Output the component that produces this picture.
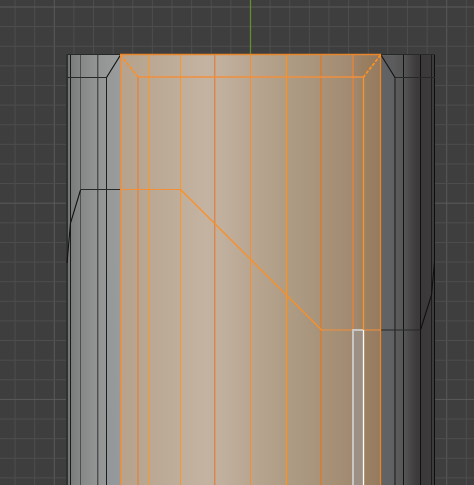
import React from 'react';

const GRID_STEP = 19.62;

const gridColumns = Array.from({ length: 25 }, (_, i) => ({
  pos: 250.5 + (i - 12) * GRID_STEP,
  major: Math.abs(i - 12) === 10,
}));

const gridRows = Array.from({ length: 25 }, (_, i) => ({
  pos: 7 + i * GRID_STEP,
  major: i % 10 === 0,
}));

// Vertical edges of the unselected faces
const darkEdges = [
  { x: 67, top: 54, color: '#303131', width: 2 },
  { x: 70.5, top: 54, color: '#1b1b1b', width: 1 },
  { x: 80.5, top: 54, color: '#4e504f', width: 1 },
  { x: 97.5, top: 54, color: '#4d4f4e', width: 1 },
  { x: 98.5, top: 54, color: '#747675', width: 1 },
  { x: 106.5, top: 77, color: '#1d1e1e', width: 1 },
  { x: 395, top: 77, color: '#3b3b3b', width: 2 },
  { x: 403.5, top: 54, color: '#141414', width: 1 },
  { x: 420.5, top: 54, color: '#101010', width: 1 },
  { x: 431.5, top: 54, color: '#1d1c1c', width: 1 },
  { x: 434.5, top: 54, color: '#0e0e0e', width: 1 },
];

// Vertical edges of the selected faces
const selectedEdges = [
  { x: 120.5, top: 54, color: '#f28c32', width: 1 },
  { x: 121.5, top: 54, color: '#cc9c70', width: 1 },
  { x: 138, top: 77, color: '#d08f5f', width: 2 },
  { x: 148.5, top: 54, color: '#ff981c', width: 1 },
  { x: 180.5, top: 54, color: '#fd9528', width: 1 },
  { x: 214.5, top: 54, color: '#d9874d', width: 1 },
  { x: 215.5, top: 54, color: '#cb9f80', width: 1 },
  { x: 250.5, top: 54, color: '#f38f39', width: 1 },
  { x: 286.5, top: 54, color: '#fb9322', width: 1.4 },
  { x: 321, top: 54, color: '#c78244', width: 2 },
  { x: 353, top: 54, color: '#cf8548', width: 2 },
  { x: 363.5, top: 77, color: '#f8942a', width: 1.3 },
  { x: 380.5, top: 54, color: '#e88627', width: 1.3 },
];

const Grid = () => (
  <g strokeWidth="1">
    {gridColumns.map(({ pos, major }) => (
      <line key={`c${pos}`} x1={pos} x2={pos} y1="0" y2="485" stroke={major ? '#5a5a5a' : '#4e4e4e'} />
    ))}
    {gridRows.map(({ pos, major }) => (
      <line key={`r${pos}`} x1="0" x2="474" y1={pos} y2={pos} stroke={major ? '#5a5a5a' : '#4e4e4e'} />
    ))}
    <line x1="250.5" x2="250.5" y1="0" y2="54" stroke="#62902b" strokeWidth="1.3" />
  </g>
);

const Faces = () => (
  <g>
    <rect x="67" y="54" width="54" height="431" fill="url(#faceLeft)" />
    <rect x="120" y="54" width="261" height="431" fill="url(#faceSelected)" />
    <rect x="381" y="54" width="54" height="431" fill="url(#faceRight)" />
    <path d="M107 77 120 55V485H107Z" fill="url(#bevelShade)" />
    <path d="M363 77 380 55H353V77Z" fill="#8f7251" opacity="0.2" />
    <path d="M382 56 395 78 403 78V55Z" fill="#555656" opacity="0.4" />
  </g>
);

const Edges = ({ edges }) =>
  edges.map(({ x, top, color, width }) => (
    <line key={x} x1={x} x2={x} y1={top} y2="485" stroke={color} strokeWidth={width} />
  ));

const App = () => (
  <main className="h-screen w-full overflow-hidden bg-[#3e3e3e]">
    <svg
      className="block h-full w-full"
      viewBox="0 0 474 485"
      preserveAspectRatio="xMidYMid slice"
      fill="none"
      role="img"
      aria-label="Cylinder mesh in the 3D viewport"
    >
      <defs>
        <linearGradient id="faceLeft" gradientUnits="userSpaceOnUse" x1="67" x2="121" y1="0" y2="0">
          <stop offset="0" stopColor="#6e7070" />
          <stop offset="0.07" stopColor="#7a7c7b" />
          <stop offset="0.25" stopColor="#858886" />
          <stop offset="0.57" stopColor="#929593" />
          <stop offset="1" stopColor="#9a9d9d" />
        </linearGradient>
        <linearGradient id="faceSelected" gradientUnits="userSpaceOnUse" x1="120" x2="381" y1="0" y2="0">
          <stop offset="0" stopColor="#b8a28c" />
          <stop offset="0.06" stopColor="#b7a590" />
          <stop offset="0.23" stopColor="#bfae9b" />
          <stop offset="0.33" stopColor="#c3b3a0" />
          <stop offset="0.4" stopColor="#c0af9d" />
          <stop offset="0.5" stopColor="#b9a691" />
          <stop offset="0.64" stopColor="#ae9c85" />
          <stop offset="0.77" stopColor="#a8937a" />
          <stop offset="0.82" stopColor="#a59076" />
          <stop offset="0.9" stopColor="#a0886f" />
          <stop offset="0.94" stopColor="#9b8164" />
          <stop offset="1" stopColor="#957a5f" />
        </linearGradient>
        <linearGradient id="faceRight" gradientUnits="userSpaceOnUse" x1="381" x2="435" y1="0" y2="0">
          <stop offset="0" stopColor="#626365" />
          <stop offset="0.24" stopColor="#5f6163" />
          <stop offset="0.28" stopColor="#5b5c5b" />
          <stop offset="0.42" stopColor="#565656" />
          <stop offset="0.65" stopColor="#3d3b3b" />
          <stop offset="0.75" stopColor="#3b3839" />
          <stop offset="1" stopColor="#3e3b3b" />
        </linearGradient>
        <linearGradient id="bevelShade" gradientUnits="userSpaceOnUse" x1="0" x2="0" y1="240" y2="485">
          <stop offset="0" stopColor="#8d949c" stopOpacity="0" />
          <stop offset="1" stopColor="#8d949c" stopOpacity="0.35" />
        </linearGradient>
      </defs>

      <Grid />
      <Faces />
      <Edges edges={darkEdges} />

      {/* rims, bevels and the cut around the back */}
      <g stroke="#272828" strokeWidth="1">
        <path d="M67 54.5H120M381 54.5H435M67 77.5H106.5M395 77.5H435" />
        <path d="M106.5 77.5 120.5 55M381 55 395 77.5" stroke="#161616" strokeWidth="1.2" />
        <path d="M80.5 189.5H120M381 330H420.5" />
        <path d="M80.5 190 70.5 223 67 263M420.5 330 431.5 295 434.5 262" stroke="#111111" strokeWidth="1.1" />
      </g>

      <Edges edges={selectedEdges} />

      <g stroke="#f28f38" strokeWidth="1">
        <path d="M120 54.5H381" stroke="#e8862c" strokeWidth="1.4" />
        <path d="M138 77H363.5" stroke="#f28f3c" strokeWidth="1.5" />
        <path d="M120.5 55 138 77M380.5 55 363.5 77" stroke="#ff9020" strokeWidth="1.7" strokeDasharray="3.5 1.5" />
        <path d="M120 189.5H180.5M321 330H381" strokeWidth="1.2" />
        <path d="M180.5 189.5 321.5 330" stroke="#fb9026" strokeWidth="1.25" />
      </g>

      {/* active face */}
      <rect x="354" y="331" width="9" height="154" fill="#9c9085" />
      <path d="M353 485V330H363" stroke="#c9c7c3" strokeWidth="2" />
      <path d="M363.5 330V485" stroke="#fffaf6" strokeWidth="1.3" />
    </svg>
  </main>
);

export default App;
